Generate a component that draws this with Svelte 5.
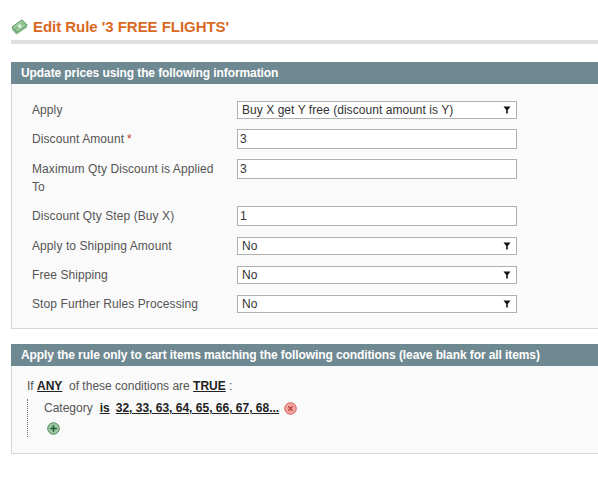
<script lang="ts">
  const fields = [
    { label: "Apply", type: "select", value: "Buy X get Y free (discount amount is Y)" },
    { label: "Discount Amount", required: true, type: "input", value: "3" },
    { label: "Maximum Qty Discount is Applied To", type: "input", value: "3" },
    { label: "Discount Qty Step (Buy X)", type: "input", value: "1" },
    { label: "Apply to Shipping Amount", type: "select", value: "No" },
    { label: "Free Shipping", type: "select", value: "No" },
    { label: "Stop Further Rules Processing", type: "select", value: "No" },
  ];
</script>

<div class="page">
  <div class="page-title">
    <svg class="title-icon" width="17" height="16" viewBox="0 0 17 16">
      <path d="M0.8 10 L5.5 15.2 L16 8 L11.5 3 Z" fill="#7fb784" stroke="#9ccba3" />
      <path d="M1 8 L11 0.8 L16.2 6 L6 13.5 Z" fill="#8fc08f" stroke="#5f9a6a" />
      <path d="M3.2 8 L11 2.4 M6 12 L14 6" stroke="#bfe0bf" stroke-width="0.8" />
      <circle cx="8.8" cy="7.1" r="1.9" fill="#dcefd6" />
    </svg>
    <h3>Edit Rule '3 FREE FLIGHTS'</h3>
  </div>

  <div class="section-head">Update prices using the following information</div>
  <div class="fieldset">
    <div class="form">
      {#each fields as field}
        <div class="row is-{field.type}">
          <div class="label">
            {field.label}{#if field.required}<span class="req">*</span>{/if}
          </div>
          {#if field.type === "select"}
            <div class="dropdown">
              <span>{field.value}</span>
              <svg width="8" height="8" viewBox="0 0 8 8"><path d="M0.5 0.5 H7.5 L4.8 4 V7.5 H3.2 V4 Z" fill="#111" /></svg>
            </div>
          {:else}
            <input class="text" type="text" value={field.value} />
          {/if}
        </div>
      {/each}
    </div>
  </div>

  <div class="section-head second">Apply the rule only to cart items matching the following conditions (leave blank for all items)</div>
  <div class="fieldset conditions">
    <div class="rule-line">If <u>ANY</u> &nbsp;of these conditions are <u>TRUE</u> :</div>
    <div class="rule-children">
      <div class="cond">
        <span>Category</span><u class="op">is</u><u class="op values">32, 33, 63, 64, 65, 66, 67, 68...</u>
        <svg class="cond-icon" width="13" height="13" viewBox="0 0 13 13">
          <circle cx="6.5" cy="6.5" r="5.8" fill="#f2a6a0" stroke="#d0605a" />
          <path d="M4.3 4.3 L8.7 8.7 M8.7 4.3 L4.3 8.7" stroke="#b8443e" stroke-width="1.4" />
        </svg>
      </div>
      <svg class="add-icon" width="13" height="13" viewBox="0 0 13 13">
        <circle cx="6.5" cy="6.5" r="5.8" fill="#9cc7a2" stroke="#4f8a5c" />
        <path d="M6.5 3.2 V9.8 M3.2 6.5 H9.8" stroke="#1f5c30" stroke-width="1.6" />
      </svg>
    </div>
  </div>
</div>

<style>
  :global(body) {
    margin: 0;
    background: #fff;
    overflow: hidden;
  }

  .page {
    width: 640px;
    padding: 17px 0 0 11px;
    font-family: "Liberation Sans", Arial, sans-serif;
    font-size: 12px;
    color: #555;
  }

  .page-title {
    display: flex;
    align-items: center;
    gap: 5px;
    height: 23px;
    border-bottom: 4px solid #dfdfdf;
    margin-bottom: 18px;
  }

  .title-icon {
    margin-top: -3px;
  }

  h3 {
    margin: -4px 0 0 0;
    font-size: 15px;
    font-weight: bold;
    color: #d9691f;
    line-height: 18px;
    letter-spacing: -0.04px;
  }

  .section-head {
    height: 22px;
    line-height: 22px;
    padding-left: 10px;
    background: #6f8992;
    color: #fff;
    font-weight: bold;
    letter-spacing: -0.09px;
  }

  .section-head.second {
    margin-top: 15px;
    white-space: nowrap;
  }

  .fieldset {
    background: #fafafa;
    border: 1px solid #d6d6d6;
    border-top: 0;
    box-sizing: border-box;
    height: 245px;
    padding: 17px 0 0 20px;
  }

  .form {
    display: flex;
    flex-direction: column;
    letter-spacing: 0.09px;
  }

  .row {
    display: grid;
    grid-template-columns: 205px 280px;
    align-items: start;
    line-height: 18px;
  }

  .row.is-select {
    padding-bottom: 11px;
  }

  .row:first-child {
    padding-bottom: 10px;
  }

  .row.is-input {
    padding-bottom: 10px;
  }

  .row.is-input:nth-child(4) {
    padding-bottom: 11px;
  }

  .label {
    width: 190px;
  }

  .row.is-input .label {
    padding-top: 1px;
  }

  .req {
    color: #c0392b;
    margin-left: 3px;
  }

  .dropdown {
    box-sizing: border-box;
    height: 18px;
    border: 1px solid #b0b0b0;
    background: #fff;
    color: #333;
    display: flex;
    align-items: center;
    justify-content: space-between;
    padding: 0 5px 0 4px;
    letter-spacing: 0.05px;
  }

  .text {
    box-sizing: border-box;
    display: block;
    width: 280px;
    height: 20px;
    border: 1px solid #b0b0b0;
    padding: 0 3px 0 2px;
    margin: 0;
    background: #fff;
    color: #333;
    font: inherit;
    outline: none;
  }

  .conditions {
    height: 88px;
    padding: 11px 0 0 15px;
  }

  .rule-line {
    line-height: 18px;
  }

  u {
    font-weight: bold;
    color: #222;
  }

  .rule-children {
    border-left: 1px dotted #777;
    margin-top: 4px;
    padding-left: 16px;
    height: 38px;
  }

  .cond {
    display: flex;
    align-items: center;
    line-height: 18px;
  }

  .op {
    margin-left: 7px;
  }

  .op.values {
    margin-left: 6px;
  }

  .cond-icon {
    margin-left: 5px;
  }

  .add-icon {
    display: block;
    margin: 5px 0 0 3px;
  }
</style>
